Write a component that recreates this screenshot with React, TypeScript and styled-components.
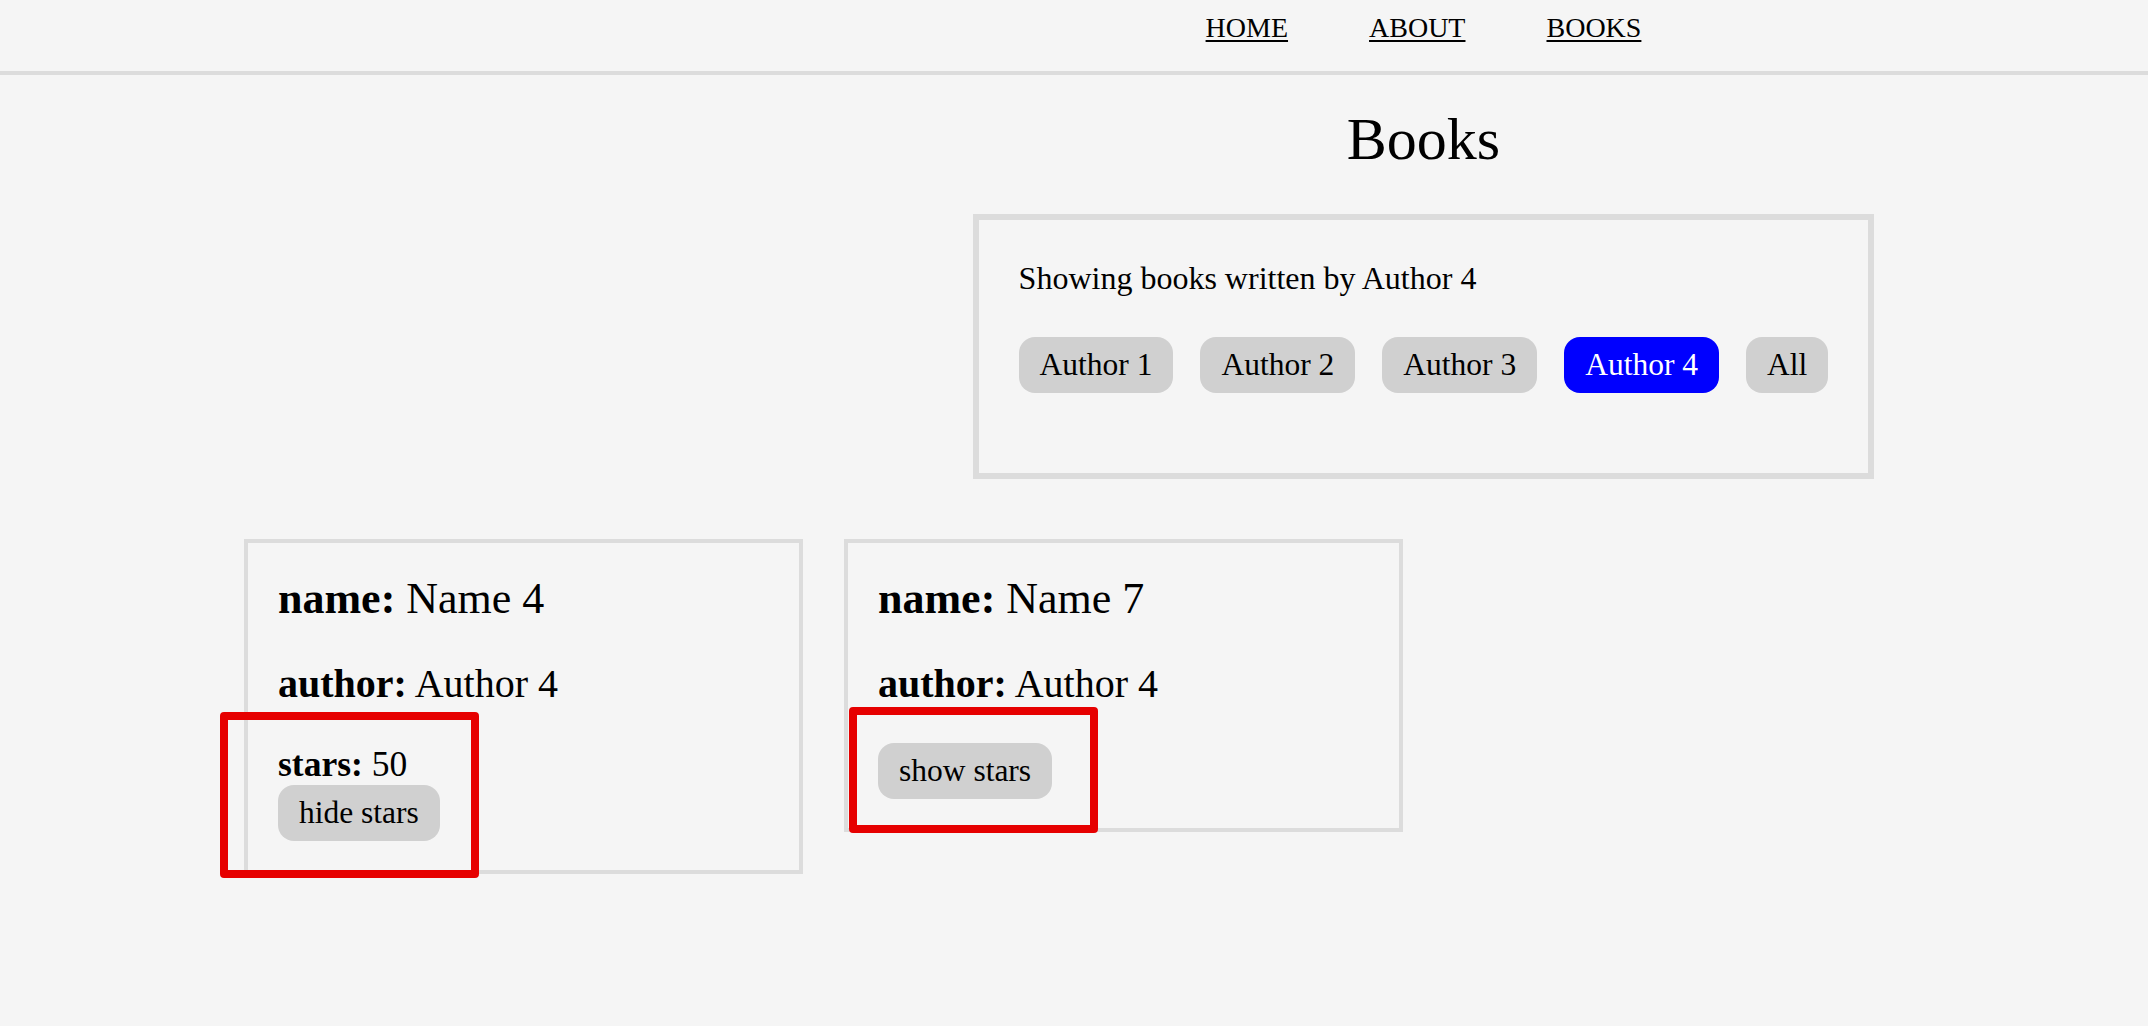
import React from "react";
import styled, { createGlobalStyle } from "styled-components";

const GlobalStyle = createGlobalStyle`
  html, body {
    margin: 0;
    padding: 0;
    background: #f5f5f5;
  }
  body {
    font-family: "Liberation Serif", "Times New Roman", serif;
    color: #000;
  }
`;

const Page = styled.div`
  min-height: 1026px;
  background: #f5f5f5;
`;

const Header = styled.header`
  border-bottom: 4px solid #dcdcdc;
  padding: 12px 0 27px 699px;
`;

const Nav = styled.nav`
  display: flex;
  justify-content: center;
  gap: 81px;
`;

const NavLink = styled.a`
  font-size: 28px;
  line-height: normal;
  color: #000;
  text-decoration: underline;
  text-decoration-thickness: 2px;
  text-underline-offset: 3px;
`;

const TopSection = styled.section`
  display: flex;
  flex-direction: column;
  align-items: center;
  padding-left: 699px;
`;

const Title = styled.h1`
  margin: 30px 0 40px;
  font-size: 60px;
  font-weight: normal;
  line-height: normal;
`;

const FilterBox = styled.div`
  border: 6px solid #dcdcdc;
  padding: 40px 40px 80px;
  display: flex;
  flex-direction: column;
  gap: 40px;
`;

const FilterText = styled.p`
  margin: 0;
  font-size: 32px;
  line-height: normal;
`;

const ButtonRow = styled.div`
  display: flex;
  gap: 27px;
`;

const Pill = styled.button<{ $active?: boolean }>`
  font-family: "Liberation Serif", "Times New Roman", serif;
  font-size: 31.5px;
  line-height: normal;
  padding: 10px 21px;
  border: none;
  border-radius: 16px;
  background: ${(p) => (p.$active ? "#0000ff" : "#d0d0d0")};
  color: ${(p) => (p.$active ? "#fff" : "#000")};
  cursor: pointer;
  align-self: flex-start;
`;

const CardRow = styled.section`
  display: flex;
  align-items: flex-start;
  gap: 41px;
  padding: 60px 0 0 244px;
`;

const Card = styled.div`
  position: relative;
  box-sizing: border-box;
  width: 559px;
  border: 4px solid #dcdcdc;
  padding: 30px 30px 29px;
  display: flex;
  flex-direction: column;
  gap: 36px;
`;

const Field = styled.div<{ $size: number }>`
  font-size: ${(p) => p.$size}px;
  line-height: normal;
`;

const Label = styled.strong`
  font-weight: bold;
`;

const StarsBlock = styled.div`
  display: flex;
  flex-direction: column;
  align-items: flex-start;
`;

const Highlight = styled.div<{ $left: number; $top: number; $w: number; $h: number }>`
  position: absolute;
  left: ${(p) => p.$left}px;
  top: ${(p) => p.$top}px;
  width: ${(p) => p.$w}px;
  height: ${(p) => p.$h}px;
  box-sizing: border-box;
  border: 8px solid #e60000;
  border-radius: 4px;
  pointer-events: none;
`;

const authors = ["Author 1", "Author 2", "Author 3", "Author 4", "All"];

export default function App() {
  return (
    <Page>
      <GlobalStyle />
      <Header>
        <Nav>
          <NavLink href="#">HOME</NavLink>
          <NavLink href="#">ABOUT</NavLink>
          <NavLink href="#">BOOKS</NavLink>
        </Nav>
      </Header>
      <TopSection>
        <Title>Books</Title>
        <FilterBox>
          <FilterText>Showing books written by Author 4</FilterText>
          <ButtonRow>
            {authors.map((a) => (
              <Pill key={a} $active={a === "Author 4"}>
                {a}
              </Pill>
            ))}
          </ButtonRow>
        </FilterBox>
      </TopSection>
      <CardRow>
        <Card>
          <Field $size={44}>
            <Label>name:</Label> Name 4
          </Field>
          <Field $size={40}>
            <Label>author:</Label> Author 4
          </Field>
          <StarsBlock>
            <Field $size={35.5}>
              <Label>stars:</Label> 50
            </Field>
            <Pill>hide stars</Pill>
          </StarsBlock>
          <Highlight $left={-28} $top={169} $w={259} $h={166} />
        </Card>
        <Card>
          <Field $size={44}>
            <Label>name:</Label> Name 7
          </Field>
          <Field $size={40}>
            <Label>author:</Label> Author 4
          </Field>
          <StarsBlock>
            <Pill>show stars</Pill>
          </StarsBlock>
          <Highlight $left={1} $top={164} $w={249} $h={126} />
        </Card>
      </CardRow>
    </Page>
  );
}
